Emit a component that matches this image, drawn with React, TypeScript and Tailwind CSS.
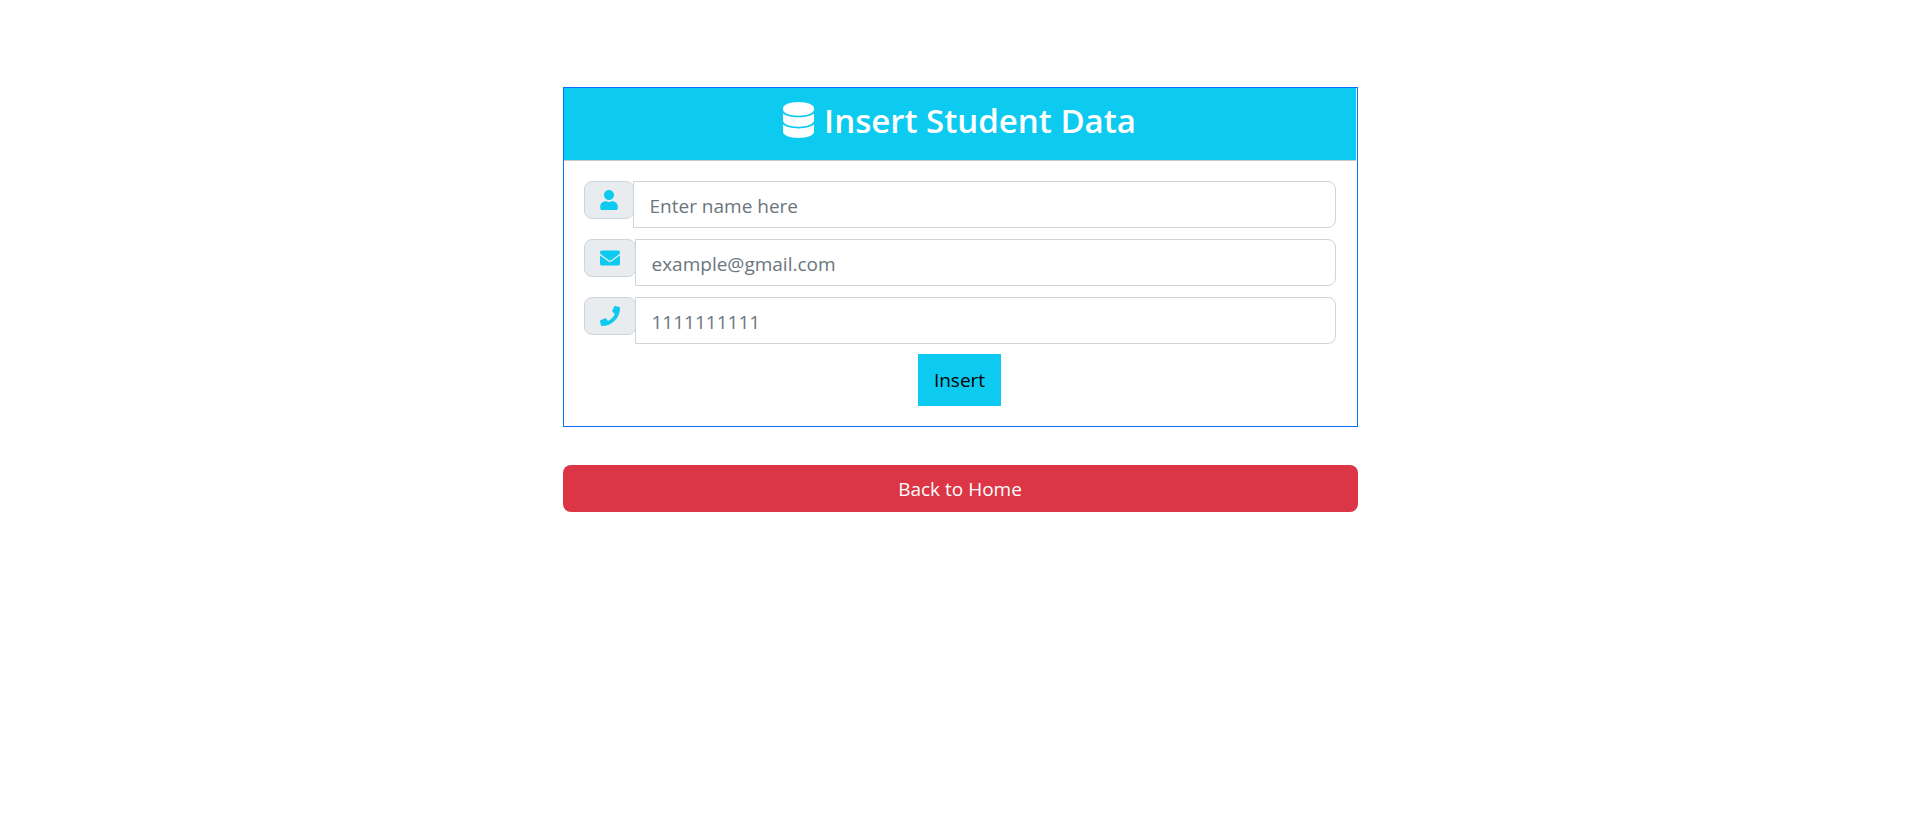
import type { ReactNode } from "react";
import { FaEnvelope, FaPhone, FaUser } from "react-icons/fa";

type FieldProps = {
  id: string;
  label: string;
  type: string;
  placeholder: string;
  icon: ReactNode;
};

function DatabaseIcon() {
  return (
    <svg viewBox="0 0 31 36" className="-mt-0.5 h-9 w-[31px]" fill="currentColor" aria-hidden="true">
      <path d="M0 6.2C0 2.8 6.9 0 15.5 0S31 2.8 31 6.2v1.4c0 3.4-6.9 6.2-15.5 6.2S0 11 0 7.6Z" />
      <path d="M0 11.4c2.6 2.4 8.6 3.8 15.5 3.8s12.900-1.400 15.500-3.800v7.200c0 3.400-6.900 6.200-15.500 6.200S0 22 0 18.600Z" />
      <path d="M0 22.600c2.600 2.400 8.600 3.800 15.500 3.800s12.900-1.400 15.500-3.800v7.200c0 3.400-6.900 6.200-15.500 6.200S0 33.200 0 29.800Z" />
    </svg>
  );
}

function Field({ id, label, type, placeholder, icon }: FieldProps) {
  return (
    <div className="flex items-start">
      <label
        htmlFor={id}
        aria-label={label}
        className="flex h-[38px] shrink-0 items-center rounded-lg border border-[#ced4da] bg-[#e9ecef] px-[15px] text-xl text-[#0dcaf0]"
      >
        {icon}
      </label>
      <input
        id={id}
        type={type}
        placeholder={placeholder}
        className="-ml-px h-[47px] min-w-0 flex-1 rounded-r-lg border border-[#ced4da] bg-white px-4 pt-0.5 text-[19px] text-[#212529] outline-none placeholder:text-[#6c757d] focus:border-[#86b7fe]"
      />
    </div>
  );
}

export default function App() {
  return (
    <main className="mx-auto w-full max-w-[795px] pt-[87px] font-['Open_Sans','Noto_Sans',sans-serif]">
      <section className="border border-[#0d6efd] bg-white pr-px">
        <header className="flex h-[73px] items-start justify-center border-b border-[#c6c8ca] bg-[#0dcaf0] pt-3 text-white">
          <h1 className="flex items-center gap-2.5 text-[33px] leading-[42px] font-semibold">
            <DatabaseIcon />
            Insert Student Data
          </h1>
        </header>
        <form className="flex flex-col gap-[10px] p-5" onSubmit={(e) => e.preventDefault()}>
          <div className="flex flex-col gap-[11px]">
            <Field
              id="name"
              label="Name"
              type="text"
              placeholder="Enter name here"
              icon={<FaUser className="h-5 w-[18px]" />}
            />
            <Field id="email" label="Email" type="email" placeholder="example@gmail.com" icon={<FaEnvelope />} />
            <Field id="phone" label="Phone" type="tel" placeholder="1111111111" icon={<FaPhone />} />
          </div>
          <button type="submit" className="h-[52px] self-center bg-[#0dcaf0] px-4 text-[19px] text-black">
            Insert
          </button>
        </form>
      </section>
      <a
        href="#home"
        className="mt-[38px] flex h-[47px] items-center justify-center rounded-lg bg-[#dc3545] pt-0.5 text-[19px] text-white"
      >
        Back to Home
      </a>
    </main>
  );
}
